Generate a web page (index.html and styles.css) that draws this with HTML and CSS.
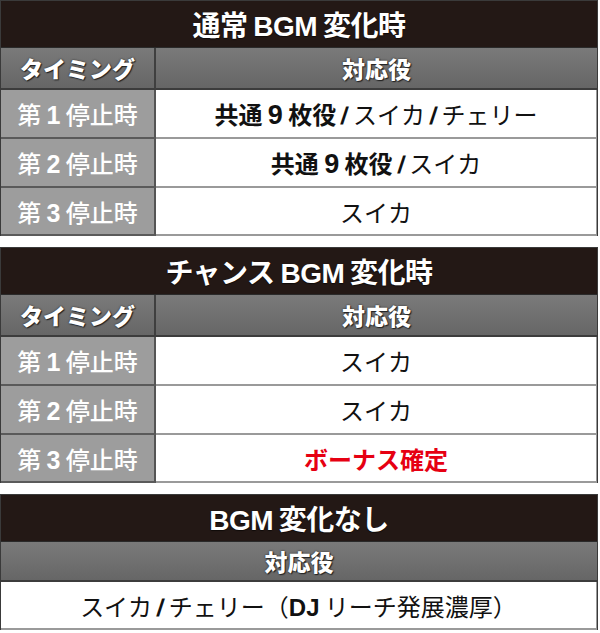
FILE: index.html
```html
<!DOCTYPE html>
<html lang="ja">
<head>
<meta charset="utf-8">
<link rel="stylesheet" href="styles.css">
</head>
<body>
<div class="page">
  <section class="tbl">
    <div class="title"><span>通常 <span class="lat">BGM</span> 変化時</span></div>
    <div class="grid">
      <div class="hd hd-left"><span>タイミング</span></div>
      <div class="hd"><span>対応役</span></div>
      <div class="lc"><span>第 <b>1</b> 停止時</span></div>
      <div class="rc"><span><span class="md">共通</span> <b class="num">9</b> <span class="md">枚役</span><b class="sl">/</b>スイカ<b class="sl">/</b>チェリー</span></div>
      <div class="lc"><span>第 <b>2</b> 停止時</span></div>
      <div class="rc"><span><span class="md">共通</span> <b class="num">9</b> <span class="md">枚役</span><b class="sl">/</b>スイカ</span></div>
      <div class="lc last"><span>第 <b>3</b> 停止時</span></div>
      <div class="rc last"><span>スイカ</span></div>
    </div>
  </section>

  <section class="tbl">
    <div class="title"><span>チャンス <span class="lat">BGM</span> 変化時</span></div>
    <div class="grid">
      <div class="hd hd-left"><span>タイミング</span></div>
      <div class="hd"><span>対応役</span></div>
      <div class="lc"><span>第 <b>1</b> 停止時</span></div>
      <div class="rc"><span>スイカ</span></div>
      <div class="lc"><span>第 <b>2</b> 停止時</span></div>
      <div class="rc"><span>スイカ</span></div>
      <div class="lc last"><span>第 <b>3</b> 停止時</span></div>
      <div class="rc last red"><span>ボーナス確定</span></div>
    </div>
  </section>

  <section class="tbl">
    <div class="title"><span><span class="lat">BGM</span> 変化なし</span></div>
    <div class="single">
      <div class="hd hd-short"><span>対応役</span></div>
      <div class="rc last"><span>スイカ<b class="sl">/</b>チェリー（<b class="lat">DJ</b> リーチ発展濃厚）</span></div>
    </div>
  </section>
</div>
</body>
</html>
```
FILE: styles.css
```css
html, body {
  margin: 0;
  padding: 0;
  background: #ffffff;
}

body {
  font-family: "Noto Sans CJK JP", "Noto Sans", sans-serif;
  color: #111111;
}

.page {
  width: 598px;
  display: flex;
  flex-direction: column;
  gap: 11px;
}

.tbl {
  border: 1px solid #3a3a3a;
  border-bottom: none;
  box-sizing: border-box;
}

.title {
  height: 47px;
  background: #231815;
  color: #ffffff;
  font-weight: 700;
  font-size: 28px;
  display: flex;
  align-items: center;
  justify-content: center;
  box-sizing: border-box;
  border-bottom: 1px solid #2a2a2a;
  text-shadow: 0 1px 1px rgba(0,0,0,0.6);
  letter-spacing: -0.5px;
}

.lat {
  font-family: "Liberation Sans", Arial, sans-serif;
  font-weight: 700;
}

.grid {
  display: grid;
  grid-template-columns: 155px 1fr;
}

.single {
  display: flex;
  flex-direction: column;
}

.hd {
  height: 42px;
  box-sizing: border-box;
  background: linear-gradient(#7a7a7a, #666666);
  color: #ffffff;
  font-weight: 900;
  font-size: 23px;
  display: flex;
  align-items: center;
  justify-content: center;
  border-bottom: 2px solid #3c3c3c;
  text-shadow: 0 0 2px #222222, 1px 1px 1px #222222;
}

.hd-left {
  border-right: 2px solid #3f3f3f;
}

.hd-short {
  height: 40px;
}

.lc {
  height: 49px;
  box-sizing: border-box;
  background: #9d9d9d;
  color: #ffffff;
  font-size: 24px;
  font-weight: 500;
  display: flex;
  align-items: center;
  justify-content: center;
  border-right: 2px solid #555555;
  border-bottom: 2px solid #5a5a5a;
}

.lc b {
  font-family: "Liberation Sans", Arial, sans-serif;
  font-weight: 700;
  font-size: 25px;
}

.rc {
  height: 49px;
  box-sizing: border-box;
  background: #ffffff;
  color: #111111;
  font-size: 24px;
  font-weight: 400;
  display: flex;
  align-items: center;
  justify-content: center;
  border-bottom: 2px solid #9a9a9a;
  border-right: 1px solid #9a9a9a;
}

.rc.last, .lc.last {
  height: 48px;
}

.md {
  font-weight: 700;
}

.num {
  font-family: "Liberation Sans", Arial, sans-serif;
  font-weight: 700;
  font-size: 27px;
}

.sl {
  font-family: "Liberation Sans", Arial, sans-serif;
  font-weight: 700;
  font-size: 24px;
  margin: 0 5px;
  display: inline-block;
  transform: skewX(-8deg);
}

.red {
  color: #e60012;
  font-weight: 700;
}
```
